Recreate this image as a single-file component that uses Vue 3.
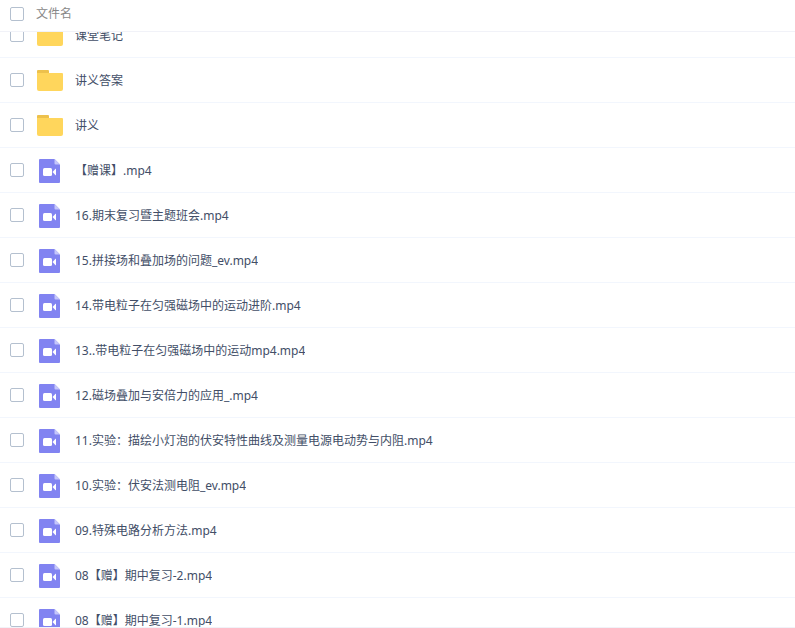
<template>
  <div class="file-panel">
    <!-- 表头 -->
    <div class="file-header">
      <input
        id="check-all"
        class="check"
        type="checkbox"
        :checked="allChecked"
        @change="toggleAll"
      />
      <label class="header-label" for="check-all">文件名</label>
    </div>

    <!-- 文件列表 -->
    <ul ref="listRef" class="file-list">
      <li v-for="(file, index) in files" :key="file.name" class="file-row">
        <input
          :id="`file-${index}`"
          v-model="checked"
          class="check"
          type="checkbox"
          :value="file.name"
        />
        <svg v-if="file.type === 'folder'" class="file-icon" viewBox="0 0 26 26" aria-hidden="true">
          <path d="M0 8V4a1 1 0 0 1 1-1h10a1 1 0 0 1 1 1v4z" fill="#edc14c" />
          <path d="M0 6h25a1 1 0 0 1 1 1v15a2 2 0 0 1-2 2H2a2 2 0 0 1-2-2z" fill="#ffd65c" />
        </svg>
        <svg v-else class="file-icon" viewBox="0 0 26 26" aria-hidden="true">
          <path d="M3 2h14.500l5.500 5.500V25a1 1 0 0 1-1 1H3a1 1 0 0 1-1-1V3a1 1 0 0 1 1-1z" fill="#8183f1" />
          <path d="M17.500 2l5.500 5.500h-4.500a1 1 0 0 1-1-1z" fill="#c6c7fa" />
          <rect x="6" y="11" width="9" height="8" rx="1.500" fill="#fff" />
          <path d="M15.500 15l3-3.200q.5-.4.500.3v5.800q0 .7-.5.300z" fill="#fff" />
        </svg>
        <label class="file-name" :for="`file-${index}`">{{ file.name }}</label>
      </li>
    </ul>
  </div>
</template>

<script setup>
import { computed, onMounted, ref } from 'vue'

const files = [
  { name: '课堂笔记', type: 'folder' },
  { name: '讲义答案', type: 'folder' },
  { name: '讲义', type: 'folder' },
  { name: '【赠课】.mp4', type: 'video' },
  { name: '16.期末复习暨主题班会.mp4', type: 'video' },
  { name: '15.拼接场和叠加场的问题_ev.mp4', type: 'video' },
  { name: '14.带电粒子在匀强磁场中的运动进阶.mp4', type: 'video' },
  { name: '13..带电粒子在匀强磁场中的运动mp4.mp4', type: 'video' },
  { name: '12.磁场叠加与安倍力的应用_.mp4', type: 'video' },
  { name: '11.实验：描绘小灯泡的伏安特性曲线及测量电源电动势与内阻.mp4', type: 'video' },
  { name: '10.实验：伏安法测电阻_ev.mp4', type: 'video' },
  { name: '09.特殊电路分析方法.mp4', type: 'video' },
  { name: '08【赠】期中复习-2.mp4', type: 'video' },
  { name: '08【赠】期中复习-1.mp4', type: 'video' }
]

const checked = ref([])
const listRef = ref(null)

const allChecked = computed(() => checked.value.length === files.length)

function toggleAll(event) {
  checked.value = event.target.checked ? files.map((file) => file.name) : []
}

// 列表初始滚动位置
onMounted(() => {
  listRef.value.scrollTop = 19
})
</script>

<style>
body {
  background: #fff;
}
</style>

<style scoped>
.file-panel {
  display: flex;
  flex-direction: column;
  box-sizing: border-box;
  height: 100vh;
  border-bottom: 1px solid #f1f2f8;
  font-family: "Noto Sans", "Noto Sans CJK SC", sans-serif;
  font-size: 12px;
  line-height: 18px;
  color: #424e67;
}

.file-header {
  display: flex;
  flex: none;
  align-items: center;
  gap: 12px;
  padding: 5px 10px 8px;
  border-bottom: 1px solid #f1f2f8;
}

.header-label {
  color: #888;
}

.file-list {
  flex: 1;
  min-height: 0;
  margin: 0;
  padding: 0;
  list-style: none;
  overflow-y: auto;
  scrollbar-width: none;
}

.file-row {
  display: flex;
  align-items: center;
  height: 44px;
  padding: 0 10px;
  border-bottom: 1px solid #f2f6fd;
}

/* 复选框 */
.check {
  flex: none;
  appearance: none;
  box-sizing: border-box;
  width: 14px;
  height: 14px;
  margin: 0;
  border: 1px solid #b4c0cf;
  border-radius: 2px;
  background: #fff;
}

.check:checked {
  border-color: #06a7ff;
  background: #06a7ff;
}

.file-icon {
  flex: none;
  width: 26px;
  height: 26px;
  margin: 0 12px 0 13px;
}

.file-name {
  padding-top: 2px;
  overflow: hidden;
  text-overflow: ellipsis;
  white-space: nowrap;
}
</style>
